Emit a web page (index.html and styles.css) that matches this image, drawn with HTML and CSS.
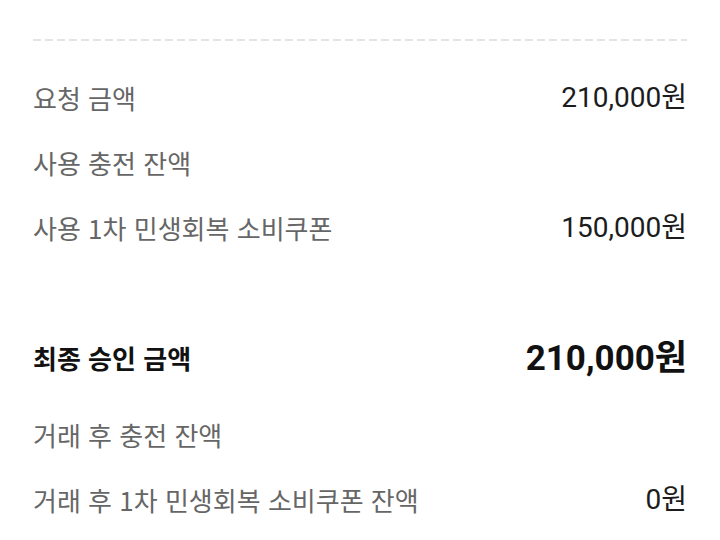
FILE: index.html
```html
<!DOCTYPE html>
<html lang="ko">
<head>
<meta charset="utf-8">
<link rel="stylesheet" href="styles.css">
</head>
<body>
<div class="page">
  <div class="divider"></div>
  <div class="list">
    <div class="row"><span class="label">요청 금액</span><span class="value">210,000원</span></div>
    <div class="row"><span class="label">사용 충전 잔액</span><span class="value"></span></div>
    <div class="row"><span class="label">사용 1차 민생회복 소비쿠폰</span><span class="value">150,000원</span></div>
    <div class="row row-empty"></div>
    <div class="row row-total"><span class="label">최종 승인 금액</span><span class="value">210,000원</span></div>
    <div class="after">
      <div class="row"><span class="label">거래 후 충전 잔액</span><span class="value"></span></div>
      <div class="row"><span class="label">거래 후 1차 민생회복 소비쿠폰 잔액</span><span class="value">0원</span></div>
    </div>
  </div>
</div>
</body>
</html>
```
FILE: styles.css
```css
html, body {
  margin: 0;
  padding: 0;
  background: #ffffff;
}
.page {
  width: 720px;
  height: 540px;
  overflow: hidden;
  padding: 39px 33px 0 33px;
  box-sizing: border-box;
  font-family: "Noto Sans CJK KR", "Noto Sans", sans-serif;
}
.divider {
  height: 2px;
  background: repeating-linear-gradient(to right, #e4e4e4 0 8px, transparent 8px 12px);
}
.list {
  margin-top: 24px;
}
.row {
  height: 65px;
  display: flex;
  align-items: center;
  justify-content: space-between;
}
.label {
  font-size: 26px;
  line-height: 1;
  color: #666666;
}
.value {
  font-family: Roboto, "Noto Sans CJK KR", sans-serif;
  font-size: 28px;
  line-height: 1;
  color: #1c1c1c;
}
.row-total {
  height: 66px;
}
.row-total .label {
  font-size: 26px;
  font-weight: 700;
  color: #111111;
}
.row-total .value {
  font-size: 35px;
  font-weight: 700;
  color: #111111;
}
.after {
  margin-top: 11px;
}
```
